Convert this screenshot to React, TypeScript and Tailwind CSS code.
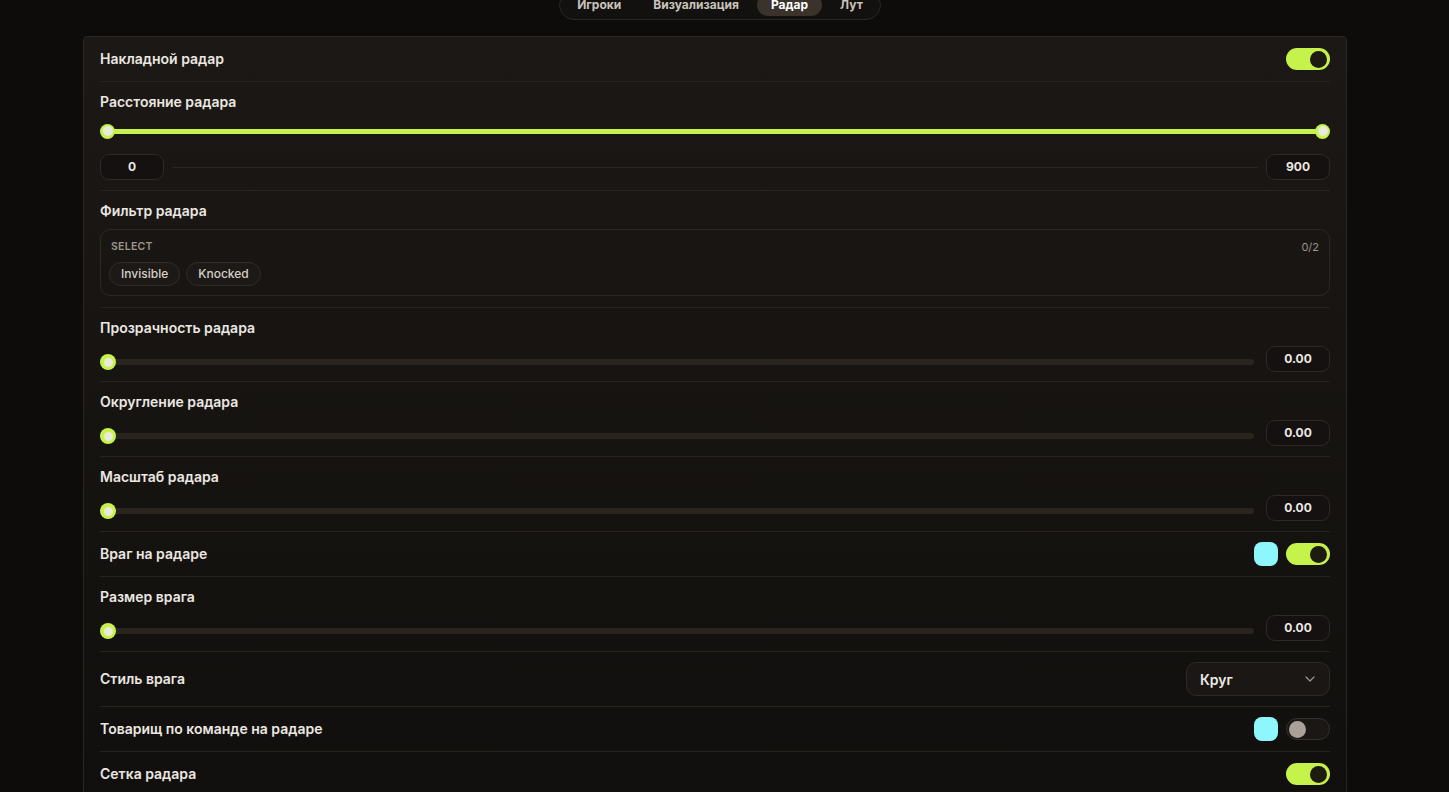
import React from "react";

const font = { fontFamily: "Inter, 'Noto Sans', sans-serif" };

function Toggle({ on }: { on: boolean }) {
  return on ? (
    <div className="relative w-[44px] h-[22px] rounded-full bg-[#c6f24c]">
      <div className="absolute right-[3px] top-[2.5px] w-[17px] h-[17px] rounded-full bg-[#1e1c10]" />
    </div>
  ) : (
    <div className="relative w-[44px] h-[22px] rounded-full bg-[#1a1714] border border-[#34302b]">
      <div className="absolute left-[2px] top-[1.5px] w-[17px] h-[17px] rounded-full bg-[#a9a198]" />
    </div>
  );
}

function Swatch() {
  return <div className="shrink-0 w-[24px] h-[24px] rounded-[8px] bg-[#8ef7fd]" />;
}

function Thumb({ size }: { size: number }) {
  return size === 16 ? (
    <div className="w-[16px] h-[16px] rounded-full bg-[#c6f24c] flex items-center justify-center">
      <div className="w-[9px] h-[9px] rounded-full bg-[#e8ebd9]" />
    </div>
  ) : (
    <div className="w-[15px] h-[15px] rounded-full bg-[#c6f24c] flex items-center justify-center">
      <div className="w-[10px] h-[10px] rounded-full bg-[#e8ebd9]" />
    </div>
  );
}

function ValueBox({ v }: { v: string }) {
  return (
    <div className="w-[64px] h-[26px] rounded-[9px] border border-[#2d2925] bg-[#141110] flex items-center justify-center text-[12px] font-bold text-[#ece8e2]">
      {v}
    </div>
  );
}

function Label({ children }: { children: React.ReactNode }) {
  return (
    <div className="h-5 leading-5 text-[14px] font-semibold text-[#ebe7e1]">{children}</div>
  );
}

function ToggleRow({ label, on, swatch }: { label: string; on: boolean; swatch?: boolean }) {
  return (
    <div className="flex items-center justify-between py-[11px] border-b border-[#27231f]">
      <Label>{label}</Label>
      <div className="flex items-center gap-2 h-[22px]">
        {swatch && <Swatch />}
        <Toggle on={on} />
      </div>
    </div>
  );
}

function SliderRow({ label, first }: { label: string; first?: boolean }) {
  return (
    <div className={first ? "pt-[10px] pb-[9px] border-b border-[#27231f]" : "pt-[10px] pb-[10px] border-b border-[#27231f]"}>
      <Label>{label}</Label>
      <div className="mt-2 flex items-end gap-3">
        <div className="flex-1 relative h-[16px] mb-[2px] flex items-center">
          <div className="absolute left-0 right-0 h-[6px] rounded-full bg-[#29241e]" />
          <div className="relative">
            <Thumb size={16} />
          </div>
        </div>
        <ValueBox v="0.00" />
      </div>
    </div>
  );
}

export default function App() {
  const tabs = ["Игроки", "Визуализация", "Радар", "Лут"];
  return (
    <div className="min-h-[792px] w-full bg-[#0d0c0b] overflow-hidden" style={font}>
      <div className="flex justify-center pr-[9px]">
        <div className="-mt-[10px] flex gap-1 p-[3px] rounded-full border border-[#2a2622] bg-[#131110]">
          {tabs.map((t) => (
            <div
              key={t}
              className={
                t === "Радар"
                  ? "h-[22px] px-3.5 rounded-full bg-[#3a332c] text-white text-[12px] font-bold leading-[22px]"
                  : "h-[22px] px-3.5 rounded-full text-[#c9c3bb] text-[12px] font-bold leading-[22px]"
              }
            >
              {t}
            </div>
          ))}
        </div>
      </div>

      <div className="mt-4 ml-[83px] w-[1264px] rounded-t-[4px] border border-[#2a2622] bg-gradient-to-b from-[#1b1815] to-[#110f0d] px-4 pb-10">
        <ToggleRow label="Накладной радар" on />

        <div className="pt-[10px] pb-[10px] border-b border-[#27231f]">
          <Label>Расстояние радара</Label>
          <div className="mt-[10px] relative h-[18px] flex items-center justify-between">
            <div className="absolute left-[6px] right-[6px] h-[5px] rounded-full bg-[#c6f24c]" />
            <div className="relative"><Thumb size={15} /></div>
            <div className="relative"><Thumb size={15} /></div>
          </div>
          <div className="mt-[14px] flex items-center gap-2">
            <ValueBox v="0" />
            <div className="flex-1 h-px bg-[#2a2622]" />
            <ValueBox v="900" />
          </div>
        </div>

        <div className="pt-[10px] pb-[11px] border-b border-[#27231f]">
          <Label>Фильтр радара</Label>
          <div className="mt-2 rounded-[10px] border border-[#2c2824] pt-[10px] px-[8px] pb-[9px]">
            <div className="flex justify-between h-[14px] leading-[14px] px-[2px]">
              <span className="text-[10.5px] font-semibold tracking-wide text-[#9d958c]">SELECT</span>
              <span className="text-[11px] text-[#9d958c]">0/2</span>
            </div>
            <div className="mt-2 flex gap-[6px]">
              {["Invisible", "Knocked"].map((c) => (
                <div
                  key={c}
                  className="h-6 px-[11px] rounded-full border border-[#322d28] bg-[#1c1916] text-[12px] font-medium text-[#d6d0c8] leading-[22px]"
                >
                  {c}
                </div>
              ))}
            </div>
          </div>
        </div>

        <SliderRow label="Прозрачность радара" first />
        <SliderRow label="Округление радара" />
        <SliderRow label="Масштаб радара" />
        <ToggleRow label="Враг на радаре" on swatch />
        <SliderRow label="Размер врага" />

        <div className="flex items-center justify-between py-[10px] border-b border-[#27231f]">
          <Label>Стиль врага</Label>
          <div className="w-[144px] h-[34px] rounded-[10px] border border-[#2e2a26] bg-[#1a1714] flex items-center justify-between pl-[13px] pr-[14px]">
            <span className="text-[14px] font-semibold text-[#efebe5]">Круг</span>
            <svg width="10" height="6" viewBox="0 0 10 6" fill="none">
              <path d="M1 1l4 4 4-4" stroke="#9d958c" strokeWidth="1.2" strokeLinecap="round" strokeLinejoin="round" />
            </svg>
          </div>
        </div>

        <ToggleRow label="Товарищ по команде на радаре" on={false} swatch />
        <ToggleRow label="Сетка радара" on />
      </div>
    </div>
  );
}
